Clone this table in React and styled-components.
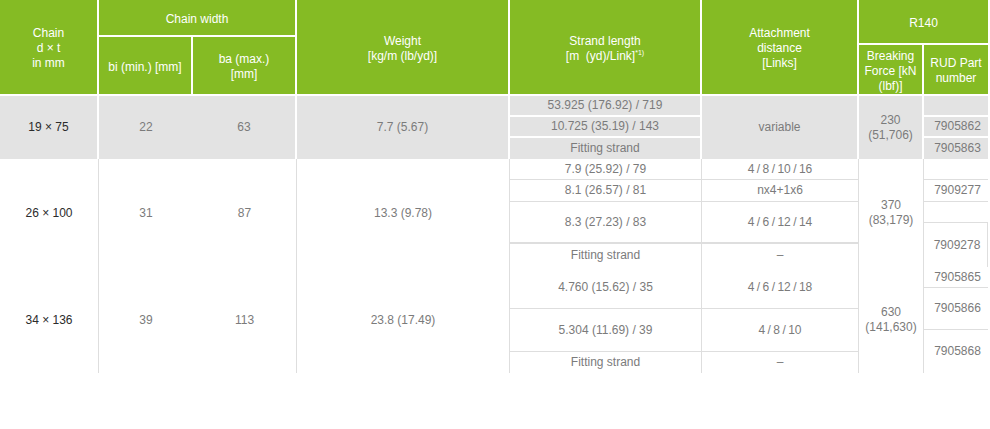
import React from "react";
import styled, { createGlobalStyle } from "styled-components";

const GREEN = "#85bb24";
const SHADE = "#e3e3e3";
const RULE = "#dedede";

const GlobalStyle = createGlobalStyle`
  *, *::before, *::after { box-sizing: border-box; }
  html, body { margin: 0; background: #fff; }
  body { font-family: "Liberation Sans", Arial, sans-serif; }
`;

const Sheet = styled.div`
  display: grid;
  width: 988px;
  grid-template-columns: 99px 94px 104px 213px 192px 157px 65px 64px;
  grid-template-rows:
    37px 8px 51px
    21px 21px 21px
    21px 22px 21px 21px 23px 21px 21px 21px 22px 21px;
`;

const Place = styled.div`
  grid-column: ${p => p.$col} / span ${p => p.$cs || 1};
  grid-row: ${p => p.$row} / span ${p => p.$rs || 1};
  display: flex;
  align-items: center;
  justify-content: center;
  text-align: center;
  font-size: 12px;
  line-height: 15px;
  white-space: pre-line;
`;

const HeadCell = styled(Place)`
  background: ${GREEN};
  color: #fff;
  border-bottom: 2px solid #fff;
  border-right: ${p => (p.$last ? "0" : "2px solid #fff")};
  padding: 3px 3px 0;
`;

const Sup = styled.sup`
  font-size: 7px;
  line-height: 0;
  vertical-align: 5px;
`;

const line = (shade, w) => (shade ? `${w || 2}px solid #fff` : `${w || 1}px solid ${RULE}`);

const BodyCell = styled(Place)`
  background: ${p => (p.$shade ? SHADE : "#fff")};
  color: ${p => (p.$strong ? "#2b2b2b" : "#7b7b7b")};
  border-right: ${p => (p.$right ? line(p.$shade) : "0")};
  border-bottom: ${p => (p.$bottom ? line(p.$shade, p.$thick) : "0")};
  padding-left: ${p => (p.$nudge ? "3px" : "0")};
`;

const ts = "\u2009/\u2009";

// c = column, r = first grid row, rs = rows spanned
const body = [
  // 19 x 75
  { c: 1, r: 4, rs: 3, t: "19 × 75", shade: true, strong: true, right: true },
  { c: 2, r: 4, rs: 3, t: "22", shade: true },
  { c: 3, r: 4, rs: 3, t: "63", shade: true, right: true },
  { c: 4, r: 4, rs: 3, t: "7.7 (5.67)", shade: true, right: true },
  { c: 5, r: 4, t: "53.925 (176.92) / 719", shade: true, right: true, bottom: true },
  { c: 5, r: 5, t: "10.725 (35.19) / 143", shade: true, right: true, bottom: true },
  { c: 5, r: 6, t: "Fitting strand", shade: true, right: true },
  { c: 6, r: 4, rs: 3, t: "variable", shade: true, right: true },
  { c: 7, r: 4, rs: 3, t: "230\n(51,706)", shade: true, right: true },
  { c: 8, r: 4, t: "", shade: true, bottom: true },
  { c: 8, r: 5, t: "7905862", shade: true, bottom: true, nudge: true },
  { c: 8, r: 6, t: "7905863", shade: true, nudge: true },

  // 26 x 100
  { c: 1, r: 7, rs: 5, t: "26 × 100", strong: true, right: true },
  { c: 2, r: 7, rs: 5, t: "31" },
  { c: 3, r: 7, rs: 5, t: "87", right: true },
  { c: 4, r: 7, rs: 5, t: "13.3 (9.78)", right: true },
  { c: 5, r: 7, t: "7.9 (25.92) / 79", right: true, bottom: true },
  { c: 5, r: 8, t: "8.1 (26.57) / 81", right: true, bottom: true },
  { c: 5, r: 9, rs: 2, t: "8.3 (27.23) / 83", right: true, bottom: true, thick: 2 },
  { c: 5, r: 11, t: "Fitting strand", right: true },
  { c: 6, r: 7, t: `4${ts}8${ts}10${ts}16`, right: true, bottom: true },
  { c: 6, r: 8, t: "nx4+1x6", right: true, bottom: true },
  { c: 6, r: 9, rs: 2, t: `4${ts}6${ts}12${ts}14`, right: true, bottom: true, thick: 2 },
  { c: 6, r: 11, t: "–", right: true },
  { c: 7, r: 7, rs: 5, t: "370\n(83,179)", right: true },
  { c: 8, r: 7, t: "", bottom: true },
  { c: 8, r: 8, t: "7909277", bottom: true, nudge: true },
  { c: 8, r: 9, t: "", bottom: true },
  { c: 8, r: 10, rs: 2, t: "7909278", right: true, nudge: true },

  // 34 x 136
  { c: 1, r: 12, rs: 5, t: "34 × 136", strong: true, right: true },
  { c: 2, r: 12, rs: 5, t: "39" },
  { c: 3, r: 12, rs: 5, t: "113", right: true },
  { c: 4, r: 12, rs: 5, t: "23.8 (17.49)", right: true },
  { c: 5, r: 12, rs: 2, t: "4.760 (15.62) / 35", right: true, bottom: true },
  { c: 5, r: 14, rs: 2, t: "5.304 (11.69) / 39", right: true, bottom: true },
  { c: 5, r: 16, t: "Fitting strand", right: true },
  { c: 6, r: 12, rs: 2, t: `4${ts}6${ts}12${ts}18`, right: true, bottom: true },
  { c: 6, r: 14, rs: 2, t: `4${ts}8${ts}10`, right: true, bottom: true },
  { c: 6, r: 16, t: "–", right: true },
  { c: 7, r: 12, rs: 5, t: "630\n(141,630)", right: true },
  { c: 8, r: 12, t: "7905865", bottom: true, nudge: true },
  { c: 8, r: 13, rs: 2, t: "7905866", bottom: true, nudge: true },
  { c: 8, r: 15, rs: 2, t: "7905868", nudge: true },
];

export default function App() {
  return (
    <>
      <GlobalStyle />
      <Sheet>
        <HeadCell $col={1} $row={1} $rs={3}>{"Chain\nd × t\nin mm"}</HeadCell>
        <HeadCell $col={2} $row={1} $cs={2}>Chain width</HeadCell>
        <HeadCell $col={2} $row={2} $rs={2}>bi (min.) [mm]</HeadCell>
        <HeadCell $col={3} $row={2} $rs={2}>{"ba (max.)\n[mm]"}</HeadCell>
        <HeadCell $col={4} $row={1} $rs={3}>{"Weight\n[kg/m (lb/yd)]"}</HeadCell>
        <HeadCell $col={5} $row={1} $rs={3}>
          <span>
            Strand length
            <br />
            [m&nbsp; (yd)/Link]<Sup>*1)</Sup>
          </span>
        </HeadCell>
        <HeadCell $col={6} $row={1} $rs={3}>{"Attachment\ndistance\n[Links]"}</HeadCell>
        <HeadCell $col={7} $row={1} $cs={2} $rs={2} $last>R140</HeadCell>
        <HeadCell $col={7} $row={3}>{"Breaking\nForce [kN\n(lbf)]"}</HeadCell>
        <HeadCell $col={8} $row={3} $last>{"RUD Part\nnumber"}</HeadCell>

        {body.map((b, i) => (
          <BodyCell
            key={i}
            $col={b.c}
            $row={b.r}
            $rs={b.rs}
            $shade={b.shade}
            $strong={b.strong}
            $right={b.right}
            $bottom={b.bottom}
            $thick={b.thick}
            $nudge={b.nudge}
          >
            {b.t}
          </BodyCell>
        ))}
      </Sheet>
    </>
  );
}
